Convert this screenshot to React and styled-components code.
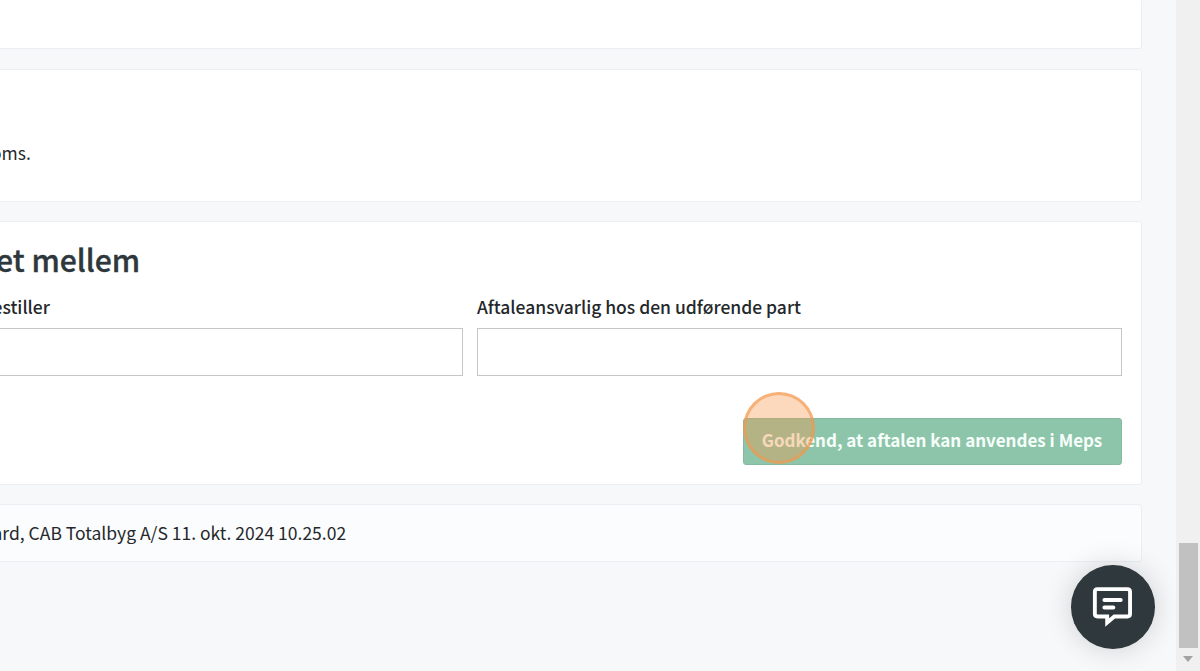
import React from "react";
import styled, { createGlobalStyle } from "styled-components";

const colors = {
  PAGE: "#f7f8fa",
  BORDER: "#eceff1",
  INPUT_BORDER: "#c6c6c6",
  TEXT: "#25282b",
  TITLE: "#2e383c",
  GREEN: "#8dc5aa",
  DARK: "#2f383c",
};

const GlobalStyle = createGlobalStyle`
  * {
    box-sizing: border-box;
  }

  body {
    margin: 0;
    overflow: hidden;
    background-color: ${colors.PAGE};
    color: ${colors.TEXT};
    font-family: "Noto Sans CJK SC", "Noto Sans CJK JP", sans-serif;
    font-size: 17.5px;
    line-height: 28px;
  }
`;

const Page = styled.div`
  display: flex;
  width: 100%;
  height: 671px;
  overflow: hidden;
`;

const Content = styled.main`
  flex: 1;
  min-width: 0;
  height: 100%;
  padding-right: 34px;
  overflow: hidden;
`;

const Card = styled.section`
  height: ${(props) => props.$height}px;
  margin: 0 0 ${(props) => props.$gap || 19}px -20px;
  padding: ${(props) => props.$top || 0}px 19px 0 20px;
  background-color: ${(props) => (props.$muted ? "#fbfcfe" : "#ffffff")};
  border: 1px solid ${colors.BORDER};
  border-top-width: ${(props) => (props.$cut ? 0 : 1)}px;
  border-radius: 3px;
`;

const Text = styled.p`
  margin: 0 0 0 ${(props) => props.$shift}px;
  white-space: nowrap;
`;

const Title = styled.h2`
  margin: 0 0 0 -5px;
  color: ${colors.TITLE};
  font-size: 30.1px;
  font-weight: 500;
  line-height: 40px;
  -webkit-text-stroke: 0.35px ${colors.TITLE};
`;

const Fields = styled.div`
  display: grid;
  grid-template-columns: 463px 645px;
  column-gap: 14px;
  margin: 14px 0 0 -1px;
`;

const Field = styled.label`
  display: flex;
  flex-direction: column;
  font-weight: 500;
`;

const Label = styled.span`
  margin-left: ${(props) => props.$shift || 0}px;
  margin-bottom: 7px;
  white-space: nowrap;
`;

const Input = styled.input`
  width: 100%;
  height: 48px;
  padding: 0 12px;
  background-color: #ffffff;
  border: 1px solid ${colors.INPUT_BORDER};
  border-left-width: ${(props) => (props.$cut ? 0 : 1)}px;
  border-radius: 0;
  font: inherit;
`;

const Actions = styled.div`
  display: flex;
  justify-content: flex-end;
  margin-top: 42px;
`;

const ApproveButton = styled.button`
  position: relative;
  width: 379px;
  height: 46.5px;
  padding: 0 1px 2px 0;
  background-color: ${colors.GREEN};
  border: 1px solid #86b9a0;
  border-radius: 3px;
  color: #f7fffb;
  font: inherit;
  font-size: 17px;
  font-weight: 700;
  white-space: nowrap;
`;

const ClickMarker = styled.span`
  position: absolute;
  top: -27px;
  left: -1px;
  width: 72px;
  height: 72px;
  background-color: rgba(247, 148, 72, 0.37);
  border: 3px solid rgba(244, 150, 75, 0.62);
  border-radius: 50%;
`;

const ChatButton = styled.button`
  position: fixed;
  top: 565px;
  left: 1071px;
  display: flex;
  justify-content: center;
  align-items: center;
  width: 83.5px;
  height: 83.5px;
  padding: 0;
  background-color: ${colors.DARK};
  border: none;
  border-radius: 50%;
  box-shadow: 0 0 28px rgba(0, 0, 0, 0.16);
`;

const Scrollbar = styled.div`
  display: flex;
  flex-direction: column;
  justify-content: flex-end;
  align-items: center;
  width: 24px;
  height: 100%;
  padding-bottom: 9px;
  background-color: #f0f0f0;
`;

const Thumb = styled.div`
  width: 19px;
  height: 105px;
  margin-bottom: 8px;
  background-color: #c1c1c1;
`;

const ArrowDown = styled.div`
  border: 5.5px solid transparent;
  border-top: 6px solid #a3a3a3;
  border-bottom: none;
`;

function ChatIcon() {
  return (
    <svg width="84" height="84" viewBox="0 0 84 84" fill="none" stroke="#ffffff">
      <path
        d="M26.5 24H56.7Q59.4 24 59.4 26.7V48.8Q59.4 51.5 56.7 51.5H43.6L36.4 57.6V51.5H26.7Q24 51.5 24 48.8V26.7Q24 24 26.5 24Z"
        strokeWidth="3.9"
      />
      <path d="M33.6 35H50M33.6 42.4H42.6" strokeWidth="4" strokeLinecap="round" />
    </svg>
  );
}

function App() {
  return (
    <Page>
      <GlobalStyle />
      <Content>
        <Card $height={49} $gap={20} $cut />
        <Card $height={133} $top={69}>
          <Text $shift={-10}>oms.</Text>
        </Card>
        <Card $height={264} $top={17}>
          <Title>et mellem</Title>
          <Fields>
            <Field>
              <Label $shift={-7.5}>estiller</Label>
              <Input $cut />
            </Field>
            <Field>
              <Label>Aftaleansvarlig hos den udførende part</Label>
              <Input />
            </Field>
          </Fields>
          <Actions>
            <ApproveButton>
              Godkend, at aftalen kan anvendes i Meps
              <ClickMarker />
            </ApproveButton>
          </Actions>
        </Card>
        <Card $height={58} $top={14} $muted>
          <Text $shift={-8.5}>ard, CAB Totalbyg A/S 11. okt. 2024 10.25.02</Text>
        </Card>
      </Content>
      <Scrollbar>
        <Thumb />
        <ArrowDown />
      </Scrollbar>
      <ChatButton aria-label="Chat">
        <ChatIcon />
      </ChatButton>
    </Page>
  );
}

export default App;
